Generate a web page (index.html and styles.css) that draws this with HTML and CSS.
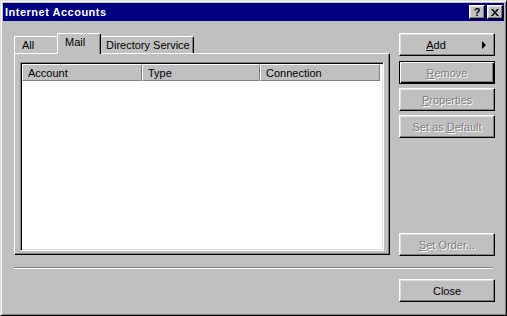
FILE: index.html
```html
<!DOCTYPE html>
<html lang="en">
<head>
  <meta charset="UTF-8">
  <title>Internet Accounts</title>
  <link rel="stylesheet" href="styles.css">
</head>
<body>
  <div class="window">
    <div class="title-bar">
      <span class="title">Internet Accounts</span>
      <div class="title-btns">
        <button class="title-btn help">?</button>
        <button class="title-btn close-x">
          <svg width="8" height="7" viewBox="0 0 8 7">
            <path d="M0 0h2l2 2.5L6 0h2L5 3.5 8 7H6L4 4.5 2 7H0l3-3.5z" fill="#000"/>
          </svg>
        </button>
      </div>
    </div>
    <div class="content">
      <div class="main-row">
        <div class="tab-area">
          <div class="tabs">
            <div class="tab tab-all">All</div>
            <div class="tab tab-mail active">Mail</div>
            <div class="tab tab-dir">Directory Service</div>
          </div>
          <div class="panel">
            <div class="list">
              <div class="list-head">
                <div class="col col-account">Account</div>
                <div class="col col-type">Type</div>
                <div class="col col-conn">Connection</div>
              </div>
            </div>
          </div>
        </div>
        <div class="btn-col">
          <button class="btn btn-add"><span><u>A</u>dd</span><i class="arrow"></i></button>
          <button class="btn btn-default disabled"><u>R</u>emove</button>
          <button class="btn disabled"><u>P</u>roperties</button>
          <button class="btn disabled">Set as <u>D</u>efault</button>
          <button class="btn btn-order disabled"><u>S</u>et Order...</button>
        </div>
      </div>
      <div class="separator"></div>
      <div class="bottom-row">
        <button class="btn">Close</button>
      </div>
    </div>
  </div>
</body>
</html>
```

FILE: styles.css
```css
html, body {
  margin: 0;
  background: #c0c0c0;
}
body {
  font-family: "Liberation Sans", Arial, sans-serif;
  font-size: 11px;
  color: #000;
}
.window {
  width: 507px;
  height: 316px;
  box-sizing: border-box;
  padding: 2px;
  background: #c0c0c0;
  border: 1px solid;
  border-color: #dfdfdf #000 #000 #dfdfdf;
  box-shadow: inset 1px 1px #fff, inset -1px -1px #808080;
}
.title-bar {
  height: 18px;
  background: #000080;
  display: flex;
  align-items: center;
  justify-content: space-between;
  padding: 0 1px 0 2px;
}
.title {
  color: #fff;
  font-weight: bold;
  font-size: 11px;
  letter-spacing: 0.5px;
}
.title-btns {
  display: flex;
  gap: 2px;
}
.title-btn {
  width: 16px;
  height: 14px;
  padding: 0;
  box-sizing: border-box;
  background: #c0c0c0;
  border: 1px solid;
  border-color: #fff #000 #000 #fff;
  box-shadow: inset -1px -1px #808080, inset 1px 1px #dfdfdf;
  display: flex;
  align-items: center;
  justify-content: center;
  font-family: "Liberation Sans", Arial, sans-serif;
  font-weight: bold;
  font-size: 11px;
  line-height: 1;
  color: #000;
}
.title-btn svg {
  display: block;
  margin-top: 1px;
}
.content {
  padding: 12px 9px 0 11px;
}
.main-row {
  display: flex;
}
.tab-area {
  width: 376px;
}
.tabs {
  display: flex;
  align-items: flex-end;
  height: 20px;
}
.tab {
  height: 17px;
  box-sizing: border-box;
  border-top: 1px solid #fff;
  border-left: 1px solid #fff;
  border-radius: 2px 2px 0 0;
  display: flex;
  align-items: center;
  padding-left: 7px;
  padding-bottom: 1px;
}
.tab-all {
  width: 43px;
}
.tab-mail {
  width: 44px;
}
.tab-dir {
  width: 93px;
  border-left: none;
  padding-left: 5px;
  border-right: 1px solid #000;
  box-shadow: inset -1px 0 #808080;
}
.tab.active {
  position: relative;
  z-index: 1;
  height: 21px;
  margin-bottom: -1px;
  background: #c0c0c0;
  border-right: 1px solid #000;
  box-shadow: inset -1px 0 #808080;
  padding-bottom: 4px;
}
.panel {
  height: 202px;
  box-sizing: border-box;
  border: 1px solid;
  border-color: #fff #000 #000 #fff;
  box-shadow: inset -1px -1px #808080;
  padding: 8px 5px 3px 5px;
}
.list {
  height: 189px;
  box-sizing: border-box;
  background: #fff;
  border: 1px solid;
  border-color: #808080 #fff #fff #808080;
  box-shadow: inset 1px 1px #000, inset -1px -1px #dfdfdf;
  padding: 1px;
}
.list-head {
  display: flex;
  height: 17px;
}
.col {
  height: 17px;
  box-sizing: border-box;
  background: #c0c0c0;
  border: 1px solid;
  border-color: #fff #808080 #808080 #fff;
  padding-left: 5px;
  display: flex;
  align-items: center;
}
.col-account {
  width: 120px;
}
.col-type {
  width: 118px;
}
.col-conn {
  width: 120px;
}
.btn-col {
  width: 96px;
  margin-left: 9px;
  display: flex;
  flex-direction: column;
}
.btn {
  width: 96px;
  height: 23px;
  box-sizing: border-box;
  padding: 0;
  background: #c0c0c0;
  border: 1px solid;
  border-color: #fff #000 #000 #fff;
  box-shadow: inset -1px -1px #808080, inset 1px 1px #dfdfdf;
  font-family: "Liberation Sans", Arial, sans-serif;
  font-size: 11px;
  color: #000;
  margin-bottom: 4px;
}
.btn u {
  text-underline-offset: 1px;
}
.btn-add {
  margin-bottom: 5px;
  display: flex;
  align-items: center;
  justify-content: center;
  position: relative;
  padding-right: 22px;
}
.btn-add .arrow {
  position: absolute;
  right: 8px;
  top: 7px;
  width: 0;
  height: 0;
  border-left: 4px solid #000;
  border-top: 4px solid transparent;
  border-bottom: 4px solid transparent;
}
.btn-default {
  border-color: #000;
  box-shadow: inset 1px 1px #fff, inset -1px -1px #000, inset -2px -2px #808080;
}
.btn.disabled {
  color: #808080;
  text-shadow: 1px 1px 0 #fff;
}
.btn-order {
  margin-top: 91px;
  margin-bottom: 0;
}
.separator {
  width: 479px;
  border-top: 1px solid #808080;
  border-bottom: 1px solid #fff;
  margin-top: 11px;
}
.bottom-row {
  display: flex;
  justify-content: flex-end;
  margin-top: 10px;
}
.bottom-row .btn {
  margin: 0;
}
```
